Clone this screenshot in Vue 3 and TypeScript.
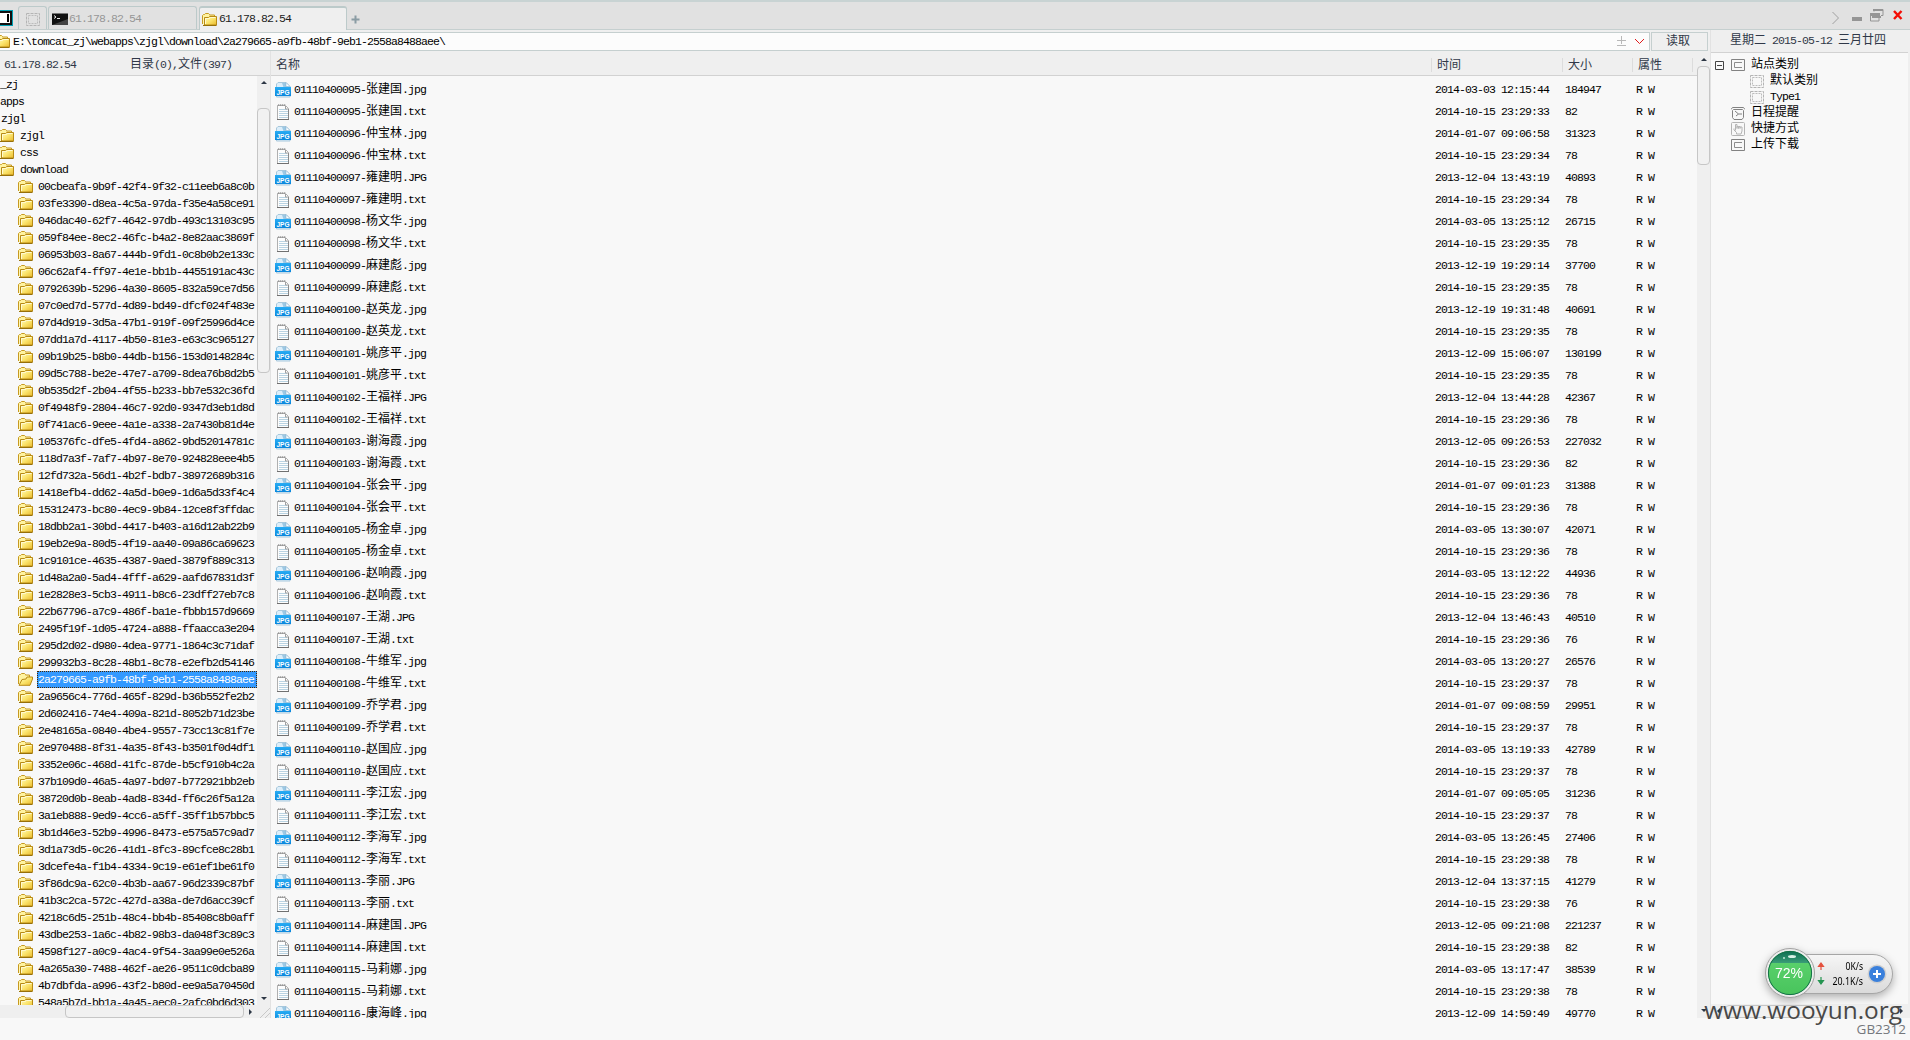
<script setup lang="ts">
import { h } from 'vue'

interface FileRow {
  name: string
  type: 'jpg' | 'txt'
  time: string
  size: string
}

// splits a string so that chinese runs get their own full-width font
const Txt = (props: { text: string }) =>
  h(
    'span',
    { class: 'txt' },
    props.text
      .split(/([\u4e00-\u9fff]+)/)
      .filter(Boolean)
      .map((part) => (/[\u4e00-\u9fff]/.test(part) ? h('span', { class: 'cjk' }, part) : part)),
  )
Txt.props = ['text']

const roots = ['_zj', 'apps', 'zjgl']
const dirs = ['zjgl', 'css', 'download']
const selected = '2a279665-a9fb-48bf-9eb1-2558a8488aee'
const folders = `00cbeafa-9b9f-42f4-9f32-c11eeb6a8c0b
03fe3390-d8ea-4c5a-97da-f35e4a58ce91
046dac40-62f7-4642-97db-493c13103c95
059f84ee-8ec2-46fc-b4a2-8e82aac3869f
06953b03-8a67-444b-9fd1-0c8b0b2e133c
06c62af4-ff97-4e1e-bb1b-4455191ac43c
0792639b-5296-4a30-8605-832a59ce7d56
07c0ed7d-577d-4d89-bd49-dfcf024f483e
07d4d919-3d5a-47b1-919f-09f25996d4ce
07dd1a7d-4117-4b50-81e3-e63c3c965127
09b19b25-b8b0-44db-b156-153d0148284c
09d5c788-be2e-47e7-a709-8dea76b8d2b5
0b535d2f-2b04-4f55-b233-bb7e532c36fd
0f4948f9-2804-46c7-92d0-9347d3eb1d8d
0f741ac6-9eee-4a1e-a338-2a7430b81d4e
105376fc-dfe5-4fd4-a862-9bd52014781c
118d7a3f-7af7-4b97-8e70-924828eee4b5
12fd732a-56d1-4b2f-bdb7-38972689b316
1418efb4-dd62-4a5d-b0e9-1d6a5d33f4c4
15312473-bc80-4ec9-9b84-12ce8f3ffdac
18dbb2a1-30bd-4417-b403-a16d12ab22b9
19eb2e9a-80d5-4f19-aa40-09a86ca69623
1c9101ce-4635-4387-9aed-3879f889c313
1d48a2a0-5ad4-4fff-a629-aafd67831d3f
1e2828e3-5cb3-4911-b8c6-23dff27eb7c8
22b67796-a7c9-486f-ba1e-fbbb157d9669
2495f19f-1d05-4724-a888-ffaacca3e204
295d2d02-d980-4dea-9771-1864c3c71daf
299932b3-8c28-48b1-8c78-e2efb2d54146
2a279665-a9fb-48bf-9eb1-2558a8488aee
2a9656c4-776d-465f-829d-b36b552fe2b2
2d602416-74e4-409a-821d-8052b71d23be
2e48165a-0840-4be4-9557-73cc13c81f7e
2e970488-8f31-4a35-8f43-b3501f0d4df1
3352e06c-468d-41fc-87de-b5cf910b4c2a
37b109d0-46a5-4a97-bd07-b772921bb2eb
38720d0b-8eab-4ad8-834d-ff6c26f5a12a
3a1eb888-9ed9-4cc6-a5ff-35ff1b57bbc5
3b1d46e3-52b9-4996-8473-e575a57c9ad7
3d1a73d5-0c26-41d1-8fc3-89cfce8c28b1
3dcefe4a-f1b4-4334-9c19-e61ef1be61f0
3f86dc9a-62c0-4b3b-aa67-96d2339c87bf
41b3c2ca-572c-427d-a38a-de7d6acc39cf
4218c6d5-251b-48c4-bb4b-85408c8b0aff
43dbe253-1a6c-4b82-98b3-da048f3c89c3
4598f127-a0c9-4ac4-9f54-3aa99e0e526a
4a265a30-7488-462f-ae26-9511c0dcba89
4b7dbfda-a996-43f2-b80d-ee9a5a70450d
548a5b7d-bb1a-4a45-aec0-2afc0bd6d303`.split('\n')

// name | picture ext | picture time | picture size | txt second | txt size
const people = `张建国|jpg|2014-03-03 12:15:44|184947|33|82
仲宝林|jpg|2014-01-07 09:06:58|31323|34|78
雍建明|JPG|2013-12-04 13:43:19|40893|34|78
杨文华|jpg|2014-03-05 13:25:12|26715|35|78
麻建彪|jpg|2013-12-19 19:29:14|37700|35|78
赵英龙|jpg|2013-12-19 19:31:48|40691|35|78
姚彦平|jpg|2013-12-09 15:06:07|130199|35|78
王福祥|JPG|2013-12-04 13:44:28|42367|36|78
谢海霞|jpg|2013-12-05 09:26:53|227032|36|82
张会平|jpg|2014-01-07 09:01:23|31388|36|78
杨金卓|jpg|2014-03-05 13:30:07|42071|36|78
赵响霞|jpg|2014-03-05 13:12:22|44936|36|78
王湖|JPG|2013-12-04 13:46:43|40510|36|76
牛维军|jpg|2014-03-05 13:20:27|26576|37|78
乔学君|jpg|2014-01-07 09:08:59|29951|37|78
赵国应|jpg|2014-03-05 13:19:33|42789|37|78
李江宏|jpg|2014-01-07 09:05:05|31236|37|78
李海军|jpg|2014-03-05 13:26:45|27406|38|78
李丽|JPG|2013-12-04 13:37:15|41279|38|76
麻建国|JPG|2013-12-05 09:21:08|221237|38|82
马莉娜|jpg|2014-03-05 13:17:47|38539|38|78
康海峰|jpg|2013-12-09 14:59:49|49770||`.split('\n')

const files: FileRow[] = people.flatMap((line, i) => {
  const [person, ext, time, size, sec, txtSize] = line.split('|')
  const base = `0${1110400095 + i}-${person}`
  const rows: FileRow[] = [{ name: `${base}.${ext}`, type: 'jpg', time, size }]
  if (sec) {
    rows.push({ name: `${base}.txt`, type: 'txt', time: `2014-10-15 23:29:${sec}`, size: txtSize })
  }
  return rows
})

const side = [
  { label: '站点类别', icon: 'box', child: false, toggle: true },
  { label: '默认类别', icon: 'dash', child: true },
  { label: 'Type1', icon: 'dash', child: true },
  { label: '日程提醒', icon: 'clock', child: false },
  { label: '快捷方式', icon: 'hand', child: false },
  { label: '上传下载', icon: 'box', child: false },
]
</script>

<template>
  <svg class="defs" width="0" height="0">
    <defs>
      <linearGradient id="gold" x1="0" y1="0" x2="1" y2="1">
        <stop offset="0" stop-color="#fffbc0" />
        <stop offset="0.5" stop-color="#fbe46c" />
        <stop offset="1" stop-color="#e9b92c" />
      </linearGradient>
      <linearGradient id="blue" x1="0" y1="0" x2="0" y2="1">
        <stop offset="0" stop-color="#28acf4" />
        <stop offset="1" stop-color="#0a86dc" />
      </linearGradient>
      <linearGradient id="pill" x1="0" y1="0" x2="0" y2="1">
        <stop offset="0" stop-color="#f6f6f6" />
        <stop offset="1" stop-color="#dadada" />
      </linearGradient>
      <linearGradient id="green" x1="0" y1="0" x2="0" y2="1">
        <stop offset="0" stop-color="#5fd470" />
        <stop offset="1" stop-color="#48c45c" />
      </linearGradient>
      <linearGradient id="dark" x1="0" y1="0" x2="0" y2="1">
        <stop offset="0" stop-color="#0c6d50" />
        <stop offset="1" stop-color="#3a9c78" />
      </linearGradient>
    </defs>
    <symbol id="folder" viewBox="0 0 15 13">
      <path d="M.5 11V2.5l1-1h1l1-1h3l1 1V2h5v2" fill="#fff3a0" stroke="#c79a20" />
      <path d="M1.5 11.5V4" stroke="#fff6b4" />
      <path d="M2.5 4.5h4l1-1h7v8.500h-12z" fill="url(#gold)" stroke="#b88a14" />
      <path d="M3.500 11V5.500h4l1-1h5" fill="none" stroke="#fffad0" />
      <path d="M1 12.500h13.500" stroke="#96700a" />
    </symbol>
    <symbol id="folder-open" viewBox="0 0 15 13">
      <path d="M.5 11V2.500l1-1h1l1-1h3l1 1V2h4v3" fill="#fff3a0" stroke="#c79a20" />
      <path d="M1 12.300 4 6.500l4-.5 1-2h5.500v2l-2.500 6.300z" fill="url(#gold)" stroke="#b88a14" />
    </symbol>
    <symbol id="dash" viewBox="0 0 14 13">
      <path d="M.5.5h13v12H.5z" fill="none" stroke="#b4b4b4" stroke-dasharray="3 1" />
      <path d="M2.500 2.500h9v8h-9z" fill="none" stroke="#bcbcbc" stroke-dasharray="2 1" />
    </symbol>
    <symbol id="box" viewBox="0 0 14 13">
      <path d="M.5.5h13v11H.5z" fill="none" stroke="#828282" />
      <path d="M11 3.500H3.500v5H11" fill="none" stroke="#8c8c8c" />
    </symbol>
    <symbol id="clock" viewBox="0 0 14 13">
      <path d="M0 2.500 1.500.5h11L14 2.500M2.500 2.500h9l1 1v7l-1.500 2H3l-1.500-2v-7z" fill="none" stroke="#828282" />
      <path d="M4 4l3.500 3H11M7.500 7 5 9" fill="none" stroke="#828282" />
    </symbol>
    <symbol id="hand" viewBox="0 0 14 14">
      <rect x=".5" y=".5" width="13" height="13" rx="1" fill="none" stroke="#b4b4b4" />
      <path d="M4.500 8.500v-6h1.500v4V4.500h1.500v2-2H9v2-1.500h2v4l-1 3H5.500v-1.500L3 8V6.500" fill="none" stroke="#b4b4b4" />
    </symbol>
  </svg>

  <div class="app">
    <div class="tabbar">
      <span class="logo"></span>
      <div class="tab blank"><svg width="14" height="13"><use href="#dash" /></svg></div>
      <div class="tab term">
        <svg width="16" height="12">
          <rect width="16" height="12" fill="#111" />
          <path d="M0 0h16v1H0z" fill="#777" />
          <path d="M0 12 16 6v6z" fill="#444" />
          <path d="M2 2.500l2 1.500-2 1.500M5 5.500h3" fill="none" stroke="#eee" />
        </svg>
        <Txt text="61.178.82.54" />
      </div>
      <div class="tab active">
        <svg width="15" height="13"><use href="#folder" /></svg>
        <Txt text="61.178.82.54" />
      </div>
      <svg class="plus" width="9" height="9"><path d="M4.500.5v8M.5 4.500h8" stroke="#8a9ca4" stroke-width="2" /></svg>
      <svg class="win" width="76" height="18">
        <path d="M4.500 4l6 6-6 6" fill="none" stroke="#a0a0a0" />
        <path d="M24 9h10v4H24z" fill="#959595" />
        <path d="M46 3.500V1.500h9v6h-2M42.500 6h8.500v7h-8.500z" fill="none" stroke="#959595" />
        <path d="M45 1h10v2H45zM42 5h10v3H42zM44 8h9v2h-9z" fill="#959595" />
        <path d="M66 3l7.500 8M73.500 3 66 11" stroke="#f40d05" stroke-width="2.400" />
      </svg>
    </div>

    <div class="body">
      <div class="left">
        <div class="address">
          <div class="path">
            <svg class="cut" width="15" height="13"><use href="#folder" /></svg>
            <Txt text="E:\tomcat_zj\webapps\zjgl\download\2a279665-a9fb-48bf-9eb1-2558a8488aee\" />
            <svg class="ops" width="30" height="13">
              <path d="M2 5.500h9M6.500 1v8M2 10.500h9" stroke="#b8b8b8" />
              <path d="M20 4l4.500 4.500L29 4" fill="none" stroke="#e01818" />
            </svg>
          </div>
          <div class="read"><Txt text="读取" /></div>
        </div>

        <div class="panes">
          <div class="treepane">
            <div class="thead">
              <Txt text="61.178.82.54" />
              <Txt text="目录(0),文件(397)" />
            </div>
            <div class="treebody">
              <div class="tree">
                <div v-for="(r, i) in roots" :key="r" class="node" :class="{ shift: i === 2 }"><Txt :text="r" /></div>
                <div v-for="d in dirs" :key="d" class="node dir">
                  <svg width="15" height="13"><use href="#folder" /></svg>
                  <Txt :text="d" />
                </div>
                <div v-for="f in folders" :key="f" class="node sub">
                  <svg width="15" height="13"><use :href="f === selected ? '#folder-open' : '#folder'" /></svg>
                  <span class="label" :class="{ selected: f === selected }"><Txt :text="f" /></span>
                </div>
              </div>
              <div class="vbar tree-vbar">
                <i class="up"></i>
                <b></b>
                <i class="down"></i>
              </div>
            </div>
            <div class="hbar tree-hbar">
              <b></b><i class="right"></i>
              <svg width="10" height="10"><path d="M0 10 10 0M5 10l5-5" stroke="#c8c8c8" /></svg>
            </div>
          </div>

          <div class="filepane">
            <div class="fhead">
              <Txt text="名称" />
              <Txt text="时间" />
              <Txt text="大小" />
              <Txt text="属性" />
              <span></span>
            </div>
            <div class="rows">
              <div v-for="f in files" :key="f.name" class="row">
                <div class="name">
                  <svg v-if="f.type === 'jpg'" width="16" height="16">
                    <path d="M1.500 15V2L3 .5h8l4 4V15z" fill="#dceefa" stroke="#a8c8dc" />
                    <path d="M7 1h4l3 3.500-5 2z" fill="#9cc8e4" />
                    <path d="M11 .5v4h4z" fill="#fff" stroke="#88b4d0" stroke-width=".6" />
                    <rect y="5" width="16" height="9" fill="url(#blue)" />
                    <text x="1.500" y="12.500" class="jpg" textLength="13" lengthAdjust="spacingAndGlyphs">JPG</text>
                  </svg>
                  <svg v-else width="16" height="16">
                    <path d="M2.500 15.500V1.500h8l3 3v11z" fill="#fdfdfd" stroke="#b0b0b0" />
                    <path d="M2 15.500h12" stroke="#707070" />
                    <path d="M13.500 5v10" stroke="#888" />
                    <path d="M3 2l1-2M5 2l1-2M7 2l1-2M9 2l1-2" stroke="#888" stroke-width=".8" />
                    <path d="M4 5.500h8M4 7.500h9M4 9.500h9M4 11.500h9M4 13.500h9" stroke="#b9d3e2" />
                    <path d="M10.500 2v3h3" fill="none" stroke="#a0a0a0" />
                  </svg>
                  <Txt :text="f.name" />
                </div>
                <Txt :text="f.time" />
                <Txt :text="f.size" />
                <Txt text="R W" />
              </div>
            </div>
          </div>
          <div class="vbar main-vbar">
            <i class="up"></i>
            <b></b>
            <i class="down"></i>
          </div>
        </div>
      </div>

      <div class="side">
        <div class="date"><Txt text="星期二 2015-05-12 三月廿四" /></div>
        <div class="sidelist">
          <div v-for="s in side" :key="s.label" class="item" :class="{ child: s.child }">
            <svg v-if="s.toggle" class="toggle" width="9" height="9">
              <path d="M.5.5h8v8h-8zM2 4.500h5" fill="none" stroke="#444" />
            </svg>
            <svg width="14" :height="s.icon === 'hand' ? 14 : 13"><use :href="'#' + s.icon" /></svg>
            <Txt :text="s.label" />
          </div>
        </div>
        <div class="hbar side-hbar"><i class="left-arrow"></i><b></b><i class="right"></i></div>
      </div>
    </div>

    <footer>GB2312</footer>

    <div class="watermark">www.wooyun.org</div>

    <svg class="speed" width="150" height="64">
      <rect x="28" y="14.500" width="114.500" height="39" rx="19.500" fill="url(#pill)" stroke="#a6a6a6" />
      <circle cx="40" cy="33" r="24.500" fill="#ececec" stroke="#a2a2a2" />
      <circle cx="40" cy="33" r="22" fill="url(#green)" />
      <path d="M20.400 23a22 22 0 0 1 39.200 0z" fill="url(#dark)" />
      <circle cx="40" cy="33" r="21.600" fill="none" stroke="#147048" />
      <ellipse cx="42" cy="16.500" rx="4" ry="1.500" fill="#d8f0e6" />
      <circle cx="34" cy="18" r="1" fill="#c0e4d6" />
      <text x="25" y="37.500" class="pct" textLength="28">72%</text>
      <path d="M71 30v-3.500h-2.500L71 23l2.500 3.500H71" fill="#e4503c" stroke="#e4503c" stroke-width="1.200" />
      <path d="M71 37v3.500h-2.500L71 44l2.500-3.500H71" fill="#249450" stroke="#249450" stroke-width="1.200" />
      <text x="95.500" y="30" class="rate" textLength="17.500" lengthAdjust="spacingAndGlyphs">0K/s</text>
      <text x="82.500" y="45" class="rate" textLength="30.500" lengthAdjust="spacingAndGlyphs">20.1K/s</text>
      <circle cx="127" cy="34" r="9.500" fill="#d0d0d0" />
      <circle cx="127" cy="34" r="8" fill="#3a80dc" />
      <path d="M127 30v8M123 34h8" stroke="#fff" stroke-width="2" />
    </svg>
  </div>
</template>

<style>
html,
body {
  margin: 0;
  overflow: hidden;
}

.txt {
  font-family: "Liberation Mono", "Noto Sans CJK SC", monospace;
  font-size: 11.5px;
  letter-spacing: -0.9px;
  line-height: 16px;
  white-space: pre;
}

.txt .cjk {
  font-family: "Noto Sans CJK SC", sans-serif;
  font-size: 12px;
  line-height: 1;
  letter-spacing: 0;
}
</style>

<style scoped>
.defs {
  position: absolute;
}

.app {
  position: relative;
  display: flex;
  flex-direction: column;
  width: 1910px;
  height: 1040px;
  overflow: hidden;
  background: #f8f8f8;
  color: #000;
}

svg {
  flex: none;
}

.tabbar {
  display: flex;
  align-items: flex-end;
  box-sizing: border-box;
  height: 30px;
  border-top: 2px solid #c8d3d3;
  border-bottom: 1px solid #c5cfcf;
  background: #e1e1e1;
}

.logo {
  box-sizing: border-box;
  width: 13px;
  height: 16px;
  margin: 0 5px 3px 0;
  border: 1px solid #00a0b4;
  border-left: 0;
  background: linear-gradient(#000, #000) 7px 3px / 2px 8px no-repeat, #fff;
  box-shadow: inset 0 2px #111, inset 0 -2px #111, inset -2px 0 #111;
}

.tab {
  display: flex;
  align-items: center;
  box-sizing: border-box;
  height: 23px;
  padding: 2px 0 0 3px;
  border: 1px solid #bccaca;
  border-bottom: 0;
  border-radius: 3px 3px 0 0;
  color: #979797;
}

.blank {
  width: 29px;
  margin-right: 1px;
  padding-left: 7px;
}

.term {
  width: 149px;
  margin-right: 2px;
  gap: 1px;
}

.active {
  width: 148px;
  height: 24px;
  margin-bottom: -1px;
  padding: 0 0 0 2px;
  gap: 2px;
  border-top: 2px solid #bccaca;
  background: #efefef;
  color: #222;
}

.plus {
  margin: 0 0 5px 4px;
}

.win {
  margin: 0 6px 3px auto;
}

.body {
  display: flex;
  height: 988px;
  background: #efefef;
}

.left {
  display: flex;
  flex-direction: column;
  width: 1710px;
}

.address {
  display: flex;
  gap: 1px;
  height: 19px;
  padding-top: 2px;
}

.path {
  display: flex;
  align-items: center;
  box-sizing: border-box;
  width: 1650px;
  border: 1px solid #c5cfcf;
  border-left: 0;
  background: #fcfcfc;
  gap: 3px;
}

.cut {
  margin-left: -5px;
}

.ops {
  margin: 0 4px 0 auto;
}

.read {
  display: flex;
  align-items: center;
  justify-content: center;
  box-sizing: border-box;
  width: 57px;
  padding: 1px 3px 0 0;
  border: 1px solid #c5cfcf;
  color: #303848;
}

.panes {
  display: flex;
  flex: 1;
  min-height: 0;
}

.treepane {
  display: flex;
  flex-direction: column;
  width: 270px;
  border-right: 1px solid #e2e2e2;
}

.thead,
.fhead {
  display: flex;
  flex: none;
  align-items: center;
  box-sizing: border-box;
  height: 25px;
  padding-top: 3px;
  border-bottom: 1px solid #d2d2d2;
  color: #303848;
}

.thead {
  gap: 54px;
  padding-left: 4px;
}

.treebody {
  display: flex;
  flex: 1;
  min-height: 0;
}

.tree {
  width: 257px;
  overflow: hidden;
  background: #f8f8f8;
}

.node {
  display: flex;
  align-items: center;
  height: 17px;
}

.shift {
  padding-left: 1px;
}

.dir {
  gap: 6px;
  margin-left: -1px;
}

.sub {
  gap: 4px;
  padding-left: 18px;
}

.label {
  display: flex;
  align-items: center;
  box-sizing: border-box;
  width: 220px;
  height: 17px;
  border: 1px solid transparent;
}

.selected {
  border: 1px dotted #4a2800;
  background: #3399ff;
  color: #fff;
}

.vbar,
.hbar {
  display: flex;
  align-items: center;
  flex: none;
  box-sizing: border-box;
  background: #efefef;
}

.vbar {
  flex-direction: column;
  width: 13px;
}

.vbar b,
.hbar b {
  box-sizing: border-box;
  border: 1px solid #c6c6c6;
  border-radius: 4px;
  background: #f1f1f1;
}

.vbar i,
.hbar i {
  border: 3px solid transparent;
}

.vbar .up {
  border-top: 0;
  border-bottom-color: #2c3644;
}

.vbar .down {
  margin-top: auto;
  border-bottom: 0;
  border-top-color: #2c3644;
}

.hbar .right {
  border-right: 0;
  border-left-color: #2c3644;
}

.hbar .left-arrow {
  border-left: 0;
  border-right-color: #2c3644;
}

.tree-vbar {
  padding: 5px 0;
}

.tree-vbar b {
  width: 13px;
  height: 265px;
  margin-top: 24px;
}

.tree-hbar {
  height: 13px;
  padding-left: 65px;
}

.tree-hbar b {
  width: 179px;
  height: 13px;
  margin-right: 5px;
}

.tree-hbar svg {
  margin: 3px 0 0 auto;
}

.filepane {
  display: flex;
  flex-direction: column;
  width: 1426px;
  background: #f8f8f8;
}

.fhead {
  display: grid;
  grid-template-columns: 1160px 131px 70px 60px 1fr;
  background: #efefef;
}

.fhead > * {
  padding-left: 5px;
  border-left: 1px solid #dcdcdc;
  line-height: 14px;
  height: 14px;
}

.fhead > *:first-child {
  border-left: 0;
}

.rows {
  flex: 1;
  min-height: 0;
  padding-top: 3px;
  overflow: hidden;
}

.row {
  display: grid;
  grid-template-columns: 1164px 130px 71px 1fr;
  align-items: center;
  height: 22px;
}

.name {
  display: flex;
  align-items: center;
  gap: 3px;
  padding-left: 4px;
}

.jpg {
  fill: #fff;
  font: bold 8px "Liberation Sans", sans-serif;
}

.main-vbar {
  padding: 7px 0 6px;
}

.main-vbar b {
  width: 13px;
  height: 99px;
  margin-top: 5px;
}

.side {
  display: flex;
  flex-direction: column;
  box-sizing: border-box;
  width: 198px;
  border-left: 1px solid #e2e2e2;
}

.date {
  display: flex;
  align-items: center;
  box-sizing: border-box;
  height: 23px;
  padding-left: 19px;
  border-bottom: 1px solid #d2d2d2;
  color: #303848;
}

.sidelist {
  flex: 1;
  padding-top: 4px;
  background: #f8f8f8;
}

.item {
  display: flex;
  align-items: center;
  gap: 6px;
  height: 16px;
  padding-left: 20px;
}

.toggle {
  margin: 0 1px 0 -16px;
}

.child {
  gap: 6px;
  padding-left: 39px;
}

.side-hbar {
  height: 14px;
  padding: 0 5px 0 6px;
}

.side-hbar b {
  width: 99px;
  height: 13px;
  margin-left: 5px;
}

.side-hbar .right {
  margin-left: auto;
}

footer {
  padding: 2px 4px 0 0;
  font: 13.5px/18px "Open Sans", sans-serif;
  color: #74777c;
  text-align: right;
}

.watermark {
  position: absolute;
  right: 8px;
  bottom: 15px;
  font: 24.4px/30px "Open Sans", sans-serif;
  color: #484848;
}

.speed {
  position: absolute;
  left: 1750px;
  top: 940px;
  filter: drop-shadow(0 3px 4px rgba(0, 0, 0, 0.3));
}

.pct {
  fill: #fff;
  font: 14px "Liberation Sans", sans-serif;
}

.rate {
  fill: #000;
  font: 10px "Noto Sans", sans-serif;
}
</style>
